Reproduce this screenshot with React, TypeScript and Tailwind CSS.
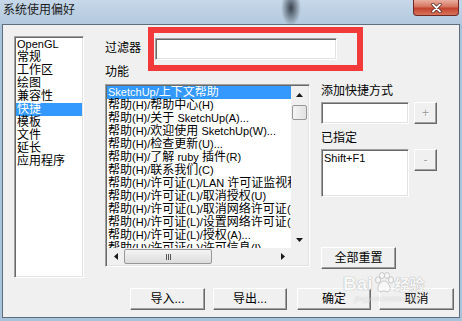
import { ReactNode } from 'react';

const CJK = /([\u3000-\u9fff\uff00-\uffef]+)/;

// Latin runs in 11px, Chinese runs in 12px, like the old dialog font pair
function Txt({ s }: { s: string }) {
    return (
        <>
            {s.split(CJK).map((part, i) =>
                CJK.test(part) ? (
                    <span key={i} className="text-[12px]">{part}</span>
                ) : (
                    part
                )
            )}
        </>
    );
}

const sunken =
    'border border-t-[#a0a0a0] border-l-[#a0a0a0] border-r-white border-b-white shadow-[inset_1px_1px_0_#696969,inset_-1px_-1px_0_#e3e3e3] bg-white';

function Button({ children, className = '', disabled = false }: { children: ReactNode; className?: string; disabled?: boolean }) {
    return (
        <div
            className={`flex h-[22px] items-center justify-center border border-t-white border-l-white border-r-[#696969] border-b-[#696969] bg-[#f0f0f0] shadow-[inset_-1px_-1px_0_#a0a0a0] text-[12px] leading-[13px] ${
                disabled ? 'text-[#a0a0a0] [text-shadow:1px_1px_0_#fff]' : 'text-black'
            } ${className}`}
        >
            {children}
        </div>
    );
}

const categories = ['OpenGL', '常规', '工作区', '绘图', '兼容性', '快捷', '模板', '文件', '延长', '应用程序'];

const commands = [
    'SketchUp/上下文帮助',
    '帮助(H)/帮助中心(H)',
    '帮助(H)/关于 SketchUp(A)...',
    '帮助(H)/欢迎使用 SketchUp(W)...',
    '帮助(H)/检查更新(U)...',
    '帮助(H)/了解 ruby 插件(R)',
    '帮助(H)/联系我们(C)',
    '帮助(H)/许可证(L)/LAN 许可证监视程序...',
    '帮助(H)/许可证(L)/取消授权(U)',
    '帮助(H)/许可证(L)/取消网络许可证(N)...',
    '帮助(H)/许可证(L)/设置网络许可证(S)...',
    '帮助(H)/许可证(L)/授权(A)...',
    '帮助(H)/许可证(L)/许可信息(I)',
];

function Arrow({ dir }: { dir: 'up' | 'down' | 'left' | 'right' }) {
    const pts = {
        up: '0,4 7,4 3.5,0',
        down: '0,0 7,0 3.5,4',
        left: '4,0 4,7 0,3.5',
        right: '0,0 0,7 4,3.5',
    }[dir];
    const vertical = dir === 'up' || dir === 'down';
    return (
        <div className="flex h-[17px] w-[17px] items-center justify-center">
            <svg width={vertical ? 7 : 4} height={vertical ? 4 : 7} viewBox={vertical ? '0 0 7 4' : '0 0 4 7'}>
                <polygon points={pts} fill="#1a1a1a" />
            </svg>
        </div>
    );
}

function CommandList() {
    return (
        <div className={`flex h-[183px] w-[205px] flex-col p-[1px] ${sunken}`}>
            <div className="flex h-[162px]">
                <div className="w-[184px] overflow-hidden whitespace-nowrap leading-[13px]">
                    {commands.map((c, i) => (
                        <div key={c} className={`h-[13px] pl-[1px] ${i === 0 ? 'bg-[#3399ff] text-white' : ''}`}>
                            <Txt s={c} />
                        </div>
                    ))}
                </div>
                {/* vertical scrollbar */}
                <div className="flex w-[17px] flex-col bg-[#f0f0f0]">
                    <Arrow dir="up" />
                    <div className="mx-[1px] mt-[2px] h-[15px] rounded-[2px] border border-[#979797] bg-[linear-gradient(90deg,#f4f4f4,#e2e2e2)]" />
                    <div className="flex-1" />
                    <Arrow dir="down" />
                </div>
            </div>
            {/* horizontal scrollbar */}
            <div className="flex h-[17px] bg-[#f0f0f0]">
                <Arrow dir="left" />
                <div className="my-[1px] flex w-[88px] items-center justify-center rounded-[2px] border border-[#979797] bg-[linear-gradient(180deg,#f4f4f4,#dcdcdc)]">
                    <div className="flex gap-[1px]">
                        <div className="h-[6px] w-[1px] bg-[#555]" />
                        <div className="h-[6px] w-[1px] bg-[#555]" />
                        <div className="h-[6px] w-[1px] bg-[#555]" />
                    </div>
                </div>
                <div className="flex-1" />
                <Arrow dir="right" />
                <div className="w-[17px]" />
            </div>
        </div>
    );
}

export default function App() {
    return (
        <div className="relative flex h-[321px] w-[462px] flex-col overflow-hidden bg-[#a9c3db] font-['Liberation_Sans','Noto_Sans_CJK_SC',sans-serif] text-[11px] text-black">
            {/* title bar */}
            <div className="flex h-[24px] justify-between bg-[radial-gradient(ellipse_10px_18px_at_291px_8px,#38424c_0%,rgba(56,66,76,0)_100%),linear-gradient(180deg,#c6d8e9,#b3c9de)]">
                <div className="pl-[3px] pt-[3px] text-[12px] leading-[14px] text-[#1b1b1b]">系统使用偏好</div>
                <div className="mr-[3px] flex h-[16px] w-[46px] items-center justify-center rounded-b-[4px] border border-t-0 border-[#6d2a22] bg-[linear-gradient(180deg,#eab0a0_0%,#d6735e_45%,#c2432e_55%,#d9745c_100%)]">
                    <svg width="11" height="10" viewBox="0 0 11 10">
                        <path d="M2 1.5 L9 8.5 M9 1.5 L2 8.5" stroke="#4a1f1a" strokeWidth="3.2" strokeLinecap="round" />
                        <path d="M2 1.5 L9 8.5 M9 1.5 L2 8.5" stroke="#ffffff" strokeWidth="1.8" strokeLinecap="round" />
                    </svg>
                </div>
            </div>

            {/* client area */}
            <div className="mx-[2px] mb-[3px] flex h-[294px] flex-col border border-[#5f6e7c] bg-[#f0f0f0] pl-[11px] pt-[11px]">
                <div className="flex h-[242px]">
                    {/* categories */}
                    <div className={`h-[242px] w-[70px] p-[1px] leading-[13px] ${sunken}`}>
                        {categories.map((c) => (
                            <div key={c} className={`h-[13px] pl-[1px] ${c === '快捷' ? 'bg-[#3399ff] text-white' : ''}`}>
                                <Txt s={c} />
                            </div>
                        ))}
                    </div>

                    <div className="ml-[21px] flex flex-col">
                        <div className="flex h-[24px] items-start">
                            <div className="w-[50px] pt-[6px] text-[12px] leading-[13px]">过滤器</div>
                            <div className={`mt-[2px] h-[22px] w-[182px] ${sunken}`} />
                        </div>
                        <div className="flex h-[24px] items-center text-[12px] leading-[13px]">功能</div>

                        <div className="flex">
                            <CommandList />

                            <div className="ml-[11px] flex w-[116px] flex-col">
                                <div className="h-[18px] pt-[1px] text-[12px] leading-[13px]">添加快捷方式</div>
                                <div className="flex">
                                    <div className={`h-[22px] w-[88px] ${sunken}`} />
                                    <Button disabled className="ml-[5px] w-[23px]">+</Button>
                                </div>
                                <div className="h-[25px] pt-[8px] text-[12px] leading-[13px]">已指定</div>
                                <div className="flex items-start">
                                    <div className={`h-[48px] w-[88px] px-[2px] pt-[2px] leading-[13px] ${sunken}`}>Shift+F1</div>
                                    <Button disabled className="ml-[5px] w-[23px]">-</Button>
                                </div>
                                <Button className="mt-[50px] w-[75px]">全部重置</Button>
                            </div>
                        </div>
                    </div>
                </div>

                <div className="mt-[10px] flex justify-end pr-[5px]">
                    <Button className="w-[75px]">
                        <Txt s="导入..." />
                    </Button>
                    <Button className="ml-[8px] w-[74px]">
                        <Txt s="导出..." />
                    </Button>
                    <Button className="ml-[10px] w-[74px]">确定</Button>
                    <Button className="ml-[8px] w-[75px]">取消</Button>
                </div>
            </div>

            {/* red annotation frame */}
            <div className="pointer-events-none absolute left-[148px] top-[27px] h-[44px] w-[215px] border-[6px] border-[#f23a3a]" />

            {/* faint watermark */}
            <div className="pointer-events-none absolute left-[343px] top-[272px] opacity-50">
                <div className="flex items-end text-white [text-shadow:0_0_1px_#777,0_0_1px_#777]">
                    <span className="text-[19px] font-bold leading-[20px]">Bai</span>
                    <svg width="20" height="22" viewBox="0 0 20 22" className="mx-[1px]">
                        <g fill="#fff" stroke="#8a8a8a" strokeWidth="0.8">
                            <ellipse cx="4" cy="8" rx="2.5" ry="3.2" />
                            <ellipse cx="8" cy="3.5" rx="2.5" ry="3" />
                            <ellipse cx="13" cy="3.5" rx="2.5" ry="3" />
                            <ellipse cx="17" cy="8" rx="2.5" ry="3.2" />
                            <path d="M10 9 C6 9 3 15 4 18 C5 21 9 19 10 19 C11 19 15 21 16 18 C17 15 14 9 10 9 Z" />
                        </g>
                    </svg>
                    <span className="text-[15px] font-bold leading-[18px]">经验</span>
                </div>
                <div className="ml-[12px] text-[8px] italic leading-[9px] text-white [text-shadow:0_0_1px_#777]">jingyan.baidu.com</div>
            </div>
        </div>
    );
}
